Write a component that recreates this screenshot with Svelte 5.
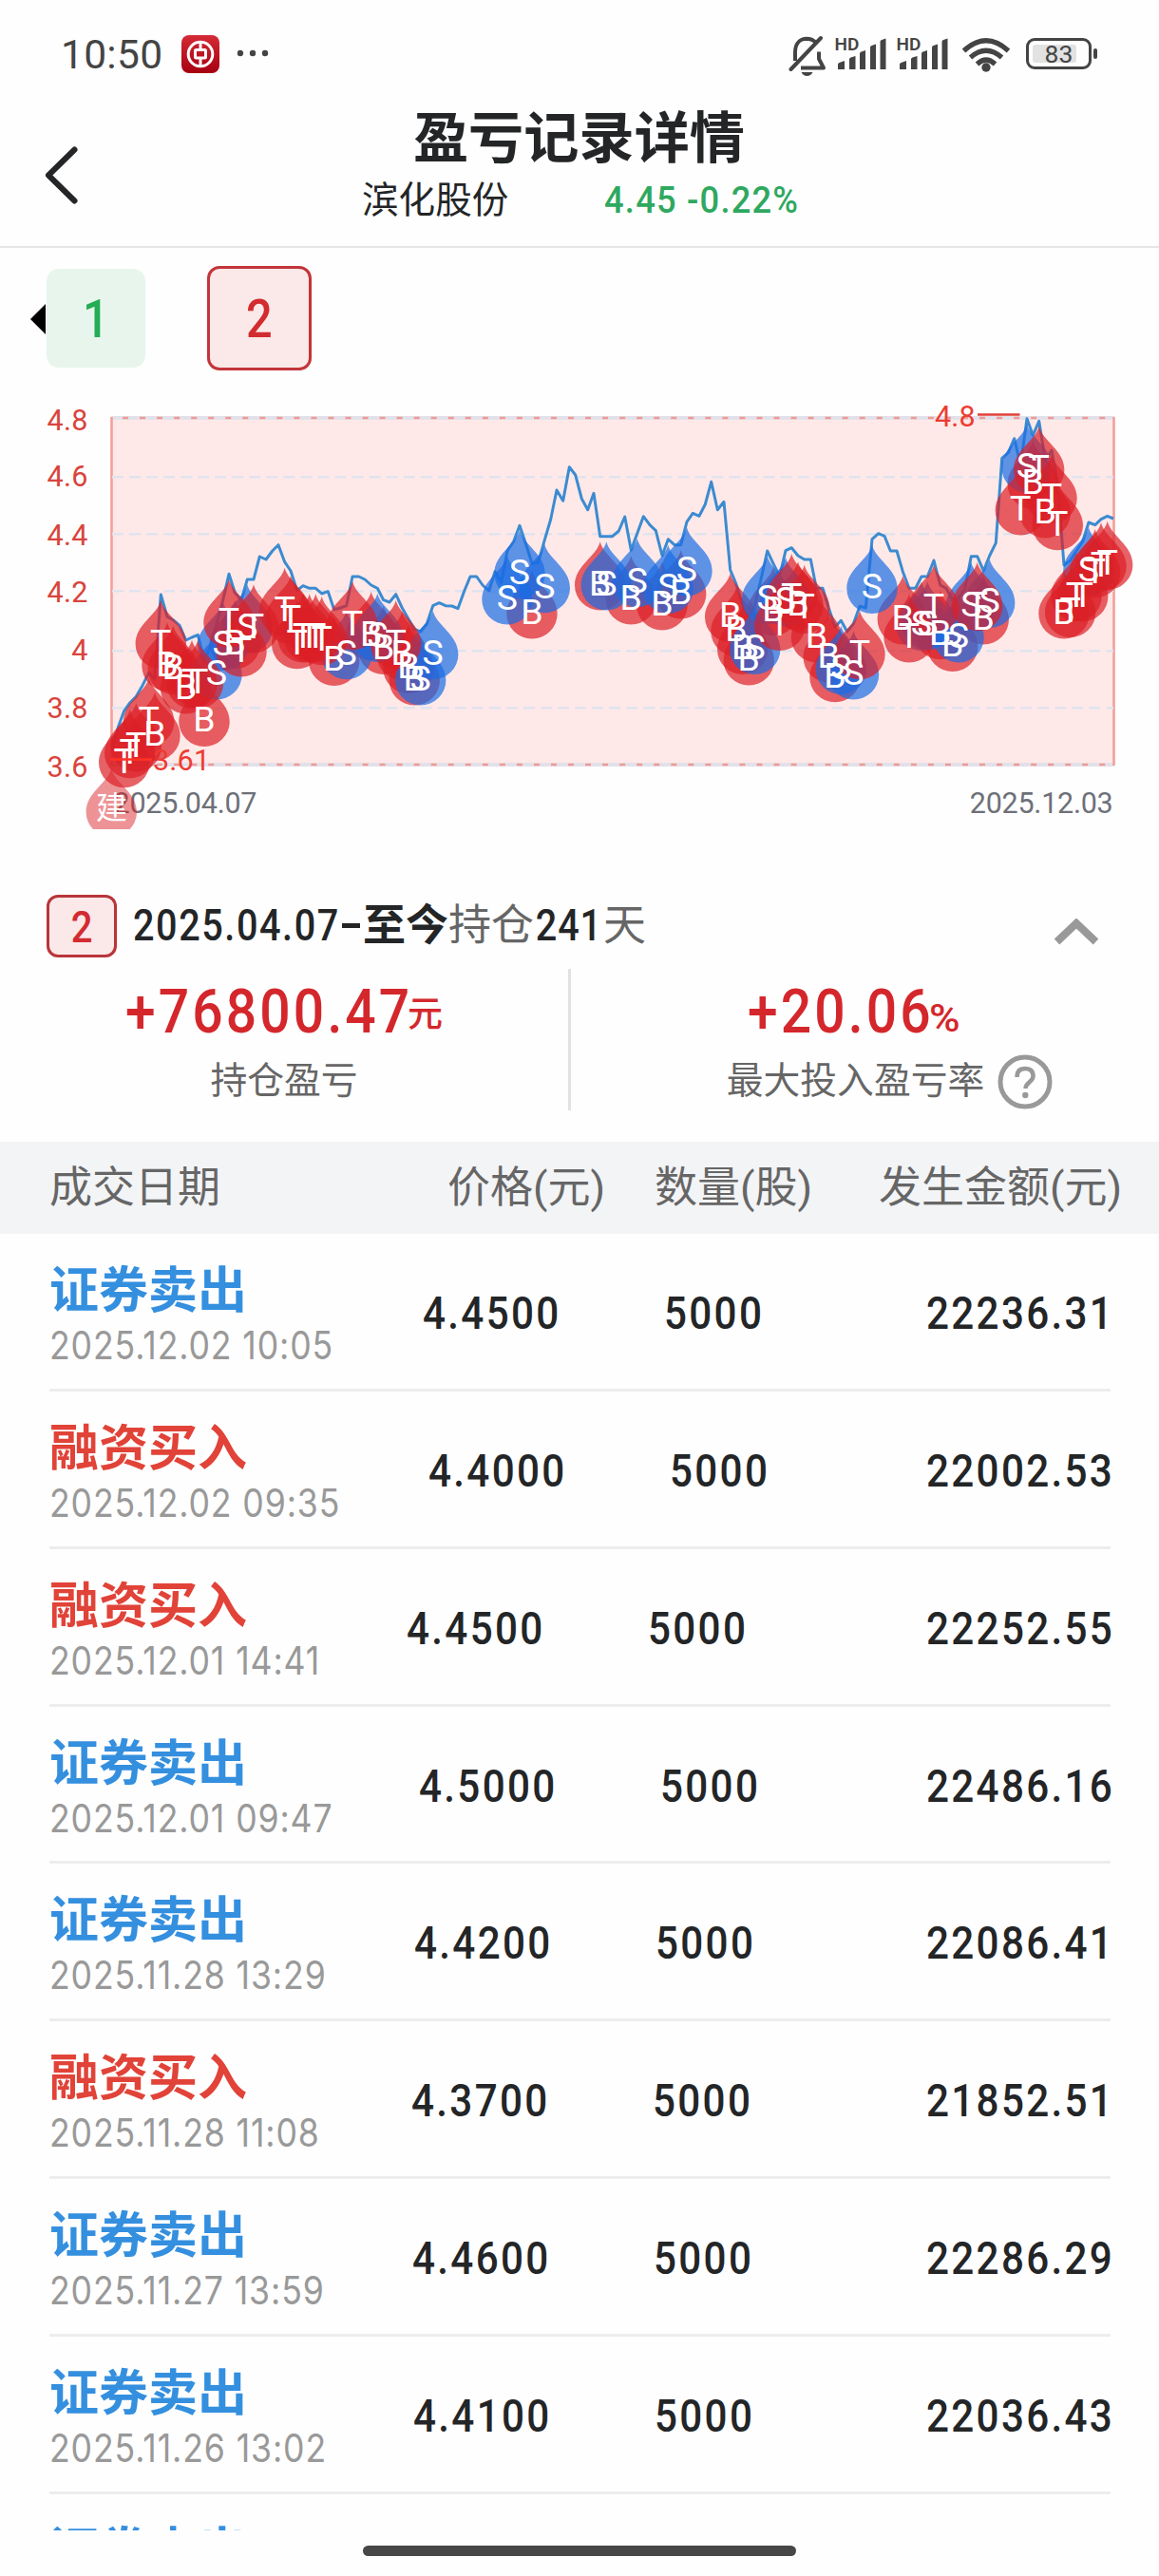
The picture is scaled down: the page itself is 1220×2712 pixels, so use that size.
<script lang="ts">
  // Price line, one vertex per trading day
  const line = [
    [118, 790], [124, 766.7], [130.7, 748.3], [136.7, 740], [143.3, 733.3], [150, 721.7], [156.7, 708.3], [162.7, 715], [169.3, 626], [176, 649.3], [182.3, 652.7], [189, 658.3], [195.7, 674], [202, 671], [208.3, 668.3], [215, 695], [221.7, 680], [228, 656.7], [234.7, 631.7], [241, 604.3], [247.3, 624], [254, 631.7], [260.3, 610], [267, 610], [273.3, 586], [280, 589], [286.7, 580], [293, 573.7], [299.7, 591.7], [306, 601], [312.7, 621.7], [319, 616.7], [325.7, 619.3], [332.3, 619.3], [338.7, 625], [345.3, 622.7], [351.7, 641.7], [358.3, 640], [364.7, 637.7], [371, 607], [377.7, 607], [384, 610], [390.7, 616], [397.3, 619.3], [403.7, 631.7], [410, 634], [416.7, 625.7], [423.3, 640], [430, 651.7], [436.3, 662.3], [442.7, 665], [449.3, 656.7], [455.7, 637.7], [462.3, 634.7],
    [469, 637.7], [475.7, 638], [482, 640.7], [488.7, 622.3], [495, 607], [501.7, 607], [508, 616], [514.7, 622], [521, 601.7], [527.7, 613.3], [534, 580], [540.7, 570], [547, 553.3], [553.7, 573.3], [560, 593.3], [566.7, 591.7], [573.3, 568.3], [579.7, 546.7], [586, 516], [592.7, 527.3], [599.3, 491.7], [605.7, 500], [612.3, 525], [618.7, 536.7], [625, 519.3], [631.7, 564.7], [638.3, 564.7], [644.7, 564.7], [651.3, 559], [657.7, 544], [664.3, 579.3], [670.7, 561.7], [677.3, 543.7], [684, 552.7], [690.3, 558.7], [697, 585], [703.3, 567.7], [710, 573.7], [716.7, 573.7], [723, 549.3], [729.3, 540.3], [736, 543.3], [742.3, 531], [748.7, 507.3], [755.3, 536.7], [762, 528.3], [768.7, 600], [775, 615], [781.7, 636.7], [788.3, 650], [794.7, 636.7], [801, 610], [807.7, 580], [814, 593.3], [820.7, 606.7], [827, 579.7], [833.3, 576.7],
    [840, 585], [846.7, 589], [853.3, 589], [859.3, 619.3], [866, 619.3], [872.3, 640], [879, 660], [885.3, 653.3], [891.7, 665], [898.3, 656.7], [905, 638.3], [911.3, 640], [918, 567.7], [924.7, 561.7], [931, 564.3], [937.3, 580], [944, 580], [950.3, 601.7], [957, 619.3], [963.7, 619.3], [970, 607], [976.3, 607], [983, 590], [989.7, 616], [996, 619.3], [1002.7, 631.7], [1009, 630], [1015.7, 620], [1022.3, 585.7], [1028.7, 585.7], [1035.3, 601], [1041.7, 585], [1048.3, 571.7], [1054.7, 482.3], [1061.3, 476.7], [1067.7, 461.7], [1074.3, 490], [1081, 440.7], [1087.3, 458.3], [1093.7, 443.3], [1100.3, 485], [1107, 474], [1113.3, 510], [1120, 595], [1126.7, 590], [1133, 580], [1139.7, 570], [1146, 550], [1152.7, 552.7], [1159, 546.7], [1165.7, 543.3], [1172, 546]
  ];
  const points = line.map((p) => p.join(',')).join(' ');

  // Trade markers by kind: B = buy, S = sell, T = both on one day
  const marks: Record<string, number[][]> = {
    B: [[163, 771.7], [176, 698.3], [182.3, 701.7], [195.7, 722.3], [215, 756.7], [247.3, 675], [351.7, 692.7], [390.7, 666], [403.7, 680.7], [423.3, 686.7], [430, 700.7], [436.3, 713.3], [560, 643.3], [631.7, 613.3], [664.3, 628.3], [697, 634.3], [716.7, 622.3], [768.7, 646.7], [775, 661.7], [781.7, 680.7], [788.3, 692.3], [814, 640], [840, 634.3], [859.5, 668.3], [872.3, 689.3], [879, 710], [950.3, 649.3], [989.7, 665], [1002.7, 677.7], [1035.3, 649.3], [1087.3, 506.7], [1100.3, 537.3], [1120, 643.3]],
    S: [[228, 707.3], [234.7, 676.7], [260.3, 658.3], [364.7, 686], [397.3, 667.7], [442.7, 713.3], [455.7, 686], [534, 628.3], [547, 601], [573.3, 616], [638.3, 613.3], [670.7, 610], [703.3, 616.7], [723, 598.3], [794.7, 680.7], [807.7, 628.3], [827, 630], [885.3, 701.7], [898.5, 707.3], [918, 616.7], [970, 655.7], [976.3, 655], [1009, 668.3], [1022.3, 635], [1041.7, 631.7], [1081, 489.3], [1146, 598.3]],
    T: [[130.7, 800], [136.7, 790], [143.3, 783.3], [156.7, 756.7], [169.3, 675], [202, 716.7], [208.3, 716.7], [241, 652.7], [254, 683.3], [267, 658.3], [299.7, 640.7], [306, 649.3], [312.7, 675], [319, 668.3], [325.7, 668.3], [332.3, 668.3], [338.7, 671], [371, 655], [416.7, 675], [820.7, 655.7], [833.3, 626], [846.7, 637.7], [905, 686], [957, 668.3], [983, 637.7], [1028.7, 635], [1093.7, 491.7], [1074.3, 534.3], [1107, 521.7], [1113.3, 550], [1126.7, 641.7], [1133, 625], [1139.7, 625], [1152.7, 600], [1159, 593.3], [1165.7, 591.7]]
  };
  const kinds = ['B', 'S', 'T'];
  const drop = 'M0-45C4-29 26.7-20 26.7 1A26.7 26.2 0 0 1-26.7 1C-26.7-20-4-29 0-45Z';
  const ticks: [string, number][] = [['4.8', 441.5], ['4.6', 501], ['4.4', 562.5], ['4.2', 623], ['4', 684], ['3.8', 745], ['3.6', 807]];
  const grid = [502.3, 562.3, 622.3, 685.3, 745.3];

  // w is the width the date column takes in that row
  const rows = [
    { kind: 'sell', date: '2025.12.02 10:05', price: '4.4500', amount: '22236.31', w: 393 },
    { kind: 'buy', date: '2025.12.02 09:35', price: '4.4000', amount: '22002.53', w: 399 },
    { kind: 'buy', date: '2025.12.01 14:41', price: '4.4500', amount: '22252.55', w: 376 },
    { kind: 'sell', date: '2025.12.01 09:47', price: '4.5000', amount: '22486.16', w: 389 },
    { kind: 'sell', date: '2025.11.28 13:29', price: '4.4200', amount: '22086.41', w: 384 },
    { kind: 'buy', date: '2025.11.28 11:08', price: '4.3700', amount: '21852.51', w: 381 },
    { kind: 'sell', date: '2025.11.27 13:59', price: '4.4600', amount: '22286.29', w: 382 },
    { kind: 'sell', date: '2025.11.26 13:02', price: '4.4100', amount: '22036.43', w: 383 },
    { kind: 'sell', date: '', price: '', amount: '', w: 384 }
  ];
</script>

{#snippet signal()}
  <svg class="signal" viewBox="0 0 54 40" width="54" height="40">
    <text x="-2.500" y="13.500" class="hd">HD</text>
    <path d="M1 34v-5q0-1.500 1.500-2L8 25v9zM13 34V23.500q0-1.500 1.500-2l5-1.500v14zM24 34V17.500q0-1.500 1.500-2l4.500-1.500v20zM35 34V11q0-1.500 1.500-2l4.500-1.500V34zM45.500 34V5q0-1.500 1.500-2l4.500-1.500V34z" />
  </svg>
{/snippet}

<div class="page">
  <div class="status">
    <span class="time">10:50</span>
    <svg class="bank" viewBox="0 0 40 40" width="40" height="40">
      <defs><linearGradient id="bank" x2="0" y2="1"><stop stop-color="#d52a37" /><stop offset="1" stop-color="#a60010" /></linearGradient></defs>
      <rect width="40" height="40" rx="8" fill="url(#bank)" />
      <g fill="none" stroke="#fff" stroke-width="3"><circle cx="20" cy="20" r="12.800" /><rect x="14.500" y="15.500" width="11" height="8.500" rx="1" /><path d="M20 7v8.500M20 24v9" /></g>
    </svg>
    <svg class="dots" viewBox="0 0 34 8" width="34" height="8"><circle cx="4" cy="4" r="3.200" /><circle cx="17" cy="4" r="3.200" /><circle cx="30" cy="4" r="3.200" /></svg>
    <div class="sys">
      <svg class="bell" viewBox="0 0 40 44" width="40" height="44">
        <g fill="none" stroke="#444" stroke-width="4" stroke-linejoin="round">
          <path d="M7 27V18C7 9 12 4 19 3.800c5 0 8 2 10 4.500M32 17.500V25l5 9.500H13" /><path d="M2.500 36 34 3" stroke-linecap="round" />
        </g>
        <path d="M13.500 39h12q-2 4-6 4t-6-4z" fill="#444" />
      </svg>
      {@render signal()}
      {@render signal()}
      <svg class="wifi" viewBox="0 0 52 40" width="52" height="40">
        <g fill="none" stroke="#444" stroke-width="5.200"><path d="M2.500 15.500Q26-6 49.500 15.500M9.500 22.500Q26 8 42.500 22.500M16.500 29.500Q26 20.500 35.500 29.500" /></g><circle cx="26" cy="33" r="4.700" fill="#444" />
      </svg>
      <div class="battery"><span class="level">83</span></div>
      <i class="cap"></i>
    </div>
  </div>

  <header>
    <svg class="back" viewBox="0 0 40 64" width="40" height="64"><path d="M33.500 5.500 6 32.500l27.500 27" fill="none" stroke="#232527" stroke-width="6" stroke-linecap="round" stroke-linejoin="round" /></svg>
    <div class="heading">
      <h1>盈亏记录详情</h1>
      <div class="quote"><span>滨化股份</span><b>4.45 -0.22%</b></div>
    </div>
  </header>

  <nav>
    <i class="arrow"></i>
    <span class="tab green"><b>1</b></span>
    <span class="tab red"><b>2</b></span>
  </nav>

  <svg class="chart" viewBox="0 410 1220 463" width="1220" height="463">
    <rect x="117.500" y="440" width="1055" height="365" fill="#ffe9e8" />
    <path d="M117 440H1173M117 805H1173" stroke="#e2e1ea" stroke-width="4" />
    <path d="M129 440H1173M129 805H1173" stroke="#f09a94" stroke-width="2.500" stroke-dasharray="6 12.040" />
    <path d="M117.500 439V806M1172.500 439V806" stroke="#f3a09a" stroke-width="2.600" />
    {#each grid as y}
      <path d="M118 {y}H1172" stroke="#e0e3ee" stroke-width="2.600" stroke-dasharray="12 6.040" />
    {/each}
    {#each ticks as [label, y]}
      <text class="tick" x="92.500" y={y + 11}>{label}</text>
    {/each}
    <text class="day" x="119.500" y="856">2025.04.07</text>
    <text class="day end" x="1171.500" y="856">2025.12.03</text>
    <polyline {points} fill="none" stroke="#3c8bd0" stroke-width="3" stroke-linejoin="round" />
    {#each kinds as kind}
      {#each marks[kind] as [x, y]}
        <path class="drop {kind}" d={drop} transform="translate({x} {y + 2})" />
      {/each}
    {/each}
    <path class="drop open" d={drop} transform="translate(117.300 854)" />
    {#each kinds as kind}
      {#each marks[kind] as [x, y]}
        <text class="letter" {x} y={y + 13.500}>{kind}</text>
      {/each}
    {/each}
    <text class="letter small" x="117.500" y="862">建</text>
    <path d="M116 799.500H160" stroke="#ff3226" stroke-width="2.600" />
    <text class="extreme" x="161" y="810.500">3.61</text>
    <path d="M1029 436.500H1073.500" stroke="#e23f38" stroke-width="2.600" />
    <text class="extreme" x="984" y="449">4.8</text>
  </svg>

  <section class="summary">
    <div class="period">
      <span class="badge"><b>2</b></span>
      <div class="range"><span class="from"><b>2025.04.07</b></span><i class="dash"></i><strong>至今</strong><em>持仓</em><span class="days"><b>241</b></span><em>天</em></div>
      <svg class="fold" viewBox="0 0 48 28" width="48" height="28"><path d="M3.500 24.500 24 5l20.500 19.500" fill="none" stroke="#999" stroke-width="8" /></svg>
    </div>
    <div class="stats">
      <div class="stat">
        <div class="value"><span class="sum"><b>+76800.47</b></span><small>元</small></div>
        <div class="name">持仓盈亏</div>
      </div>
      <div class="stat right">
        <div class="value"><span class="rate"><b>+20.06</b></span><small class="pct"><b>%</b></small></div>
        <div class="name">最大投入盈亏率
          <svg viewBox="0 0 58 58" width="58" height="58"><circle cx="29" cy="29" r="26" fill="none" stroke="#999" stroke-width="5" /><path d="M20.500 24q0-9 8.500-9t8.500 8c0 6-8 6.500-8 13" fill="none" stroke="#999" stroke-width="4.500" /><circle cx="29.300" cy="43" r="3.200" fill="#999" /></svg>
        </div>
      </div>
    </div>
  </section>

  <div class="thead"><span>成交日期</span><span>价格(元)</span><span>数量(股)</span><span>发生金额(元)</span></div>

  <div class="list">
    {#each rows as r}
      <div class="row">
        <div class="first" style="width:{r.w}px">
          <div class="type {r.kind}">{r.kind === 'sell' ? '证券卖出' : '融资买入'}</div>
          <div class="date"><span>{r.date}</span></div>
        </div>
        <span class="num"><b>{r.price}</b></span>
        <span class="num"><b>{r.price ? '5000' : ''}</b></span>
        <span class="num amount"><b>{r.amount}</b></span>
      </div>
    {/each}
  </div>
  <div class="home"><i></i></div>
</div>

<style>
  :global(body) { background: #fefefe; }
  .page { width: 1220px; height: 2712px; overflow: hidden; font-family: Roboto, 'Noto Sans CJK SC', sans-serif; color: #232527; display: flex; flex-direction: column; background: #fefefe; }
  .page > * { flex: none; }
  svg { display: block; flex: none; }

  /* Condensed figures: glyphs are narrowed and tracked out */
  b { display: inline-block; font-weight: 500; transform: scaleX(.87); transform-origin: left; letter-spacing: .055em; }

  .status { height: 100px; display: flex; align-items: flex-start; color: #444; padding-left: 64px; box-sizing: border-box; }
  .time { width: 127px; font-size: 42.5px; line-height: 116px; letter-spacing: .3px; }
  .bank { margin-top: 37px; }
  .dots { margin: 52px 0 0 18px; fill: #444; }
  .sys { display: flex; align-items: flex-start; margin: 37px 0 0 auto; padding-right: 65px; }
  .bell { margin-right: 11px; }
  .signal { fill: #444; margin: 2px 11px 0 0; overflow: visible; }
  .hd { font-size: 19px; font-weight: 600; }
  .wifi { margin: 1px 16px 0 1px; }
  .battery { width: 69px; height: 33px; margin-top: 3px; border: 3.500px solid #444; border-radius: 9px; box-sizing: border-box; padding: 3.500px; }
  .level { display: block; width: 46px; height: 19px; background: #e2e2e2; border-radius: 3px; font-size: 26.500px; line-height: 20px; text-indent: 13px; white-space: nowrap; }
  .cap { width: 4px; height: 11px; border-radius: 2px; background: #444; margin: 14px 0 0 2px; }

  header { height: 161px; box-sizing: border-box; border-bottom: 2px solid #e6e6e6; display: flex; }
  .back { margin: 52px 0 0 45px; }
  .heading { width: 1049px; text-align: center; }
  h1 { margin: 0; padding-top: 8px; font-size: 58.200px; line-height: 76px; font-weight: 700; }
  .quote { display: flex; font-size: 38.600px; line-height: 54px; padding-left: 296px; white-space: nowrap; }
  .quote span { width: 255px; text-align: left; }
  .quote b { color: #2fa860; letter-spacing: 1.300px; transform: scaleX(.94); }

  nav { height: 149px; display: flex; padding: 19px 0 0 32px; box-sizing: border-box; align-items: flex-start; }
  .arrow { border: 16px solid transparent; border-left: 0; border-right-color: #000; margin-top: 40px; }
  .tab { box-sizing: border-box; border-radius: 13px; text-align: center; font-size: 56px; }
  .tab b, .badge b { transform-origin: center; letter-spacing: 0; }
  .green { width: 104px; height: 104px; margin: 3px 65px 0 1px; background: #e8f5ec; color: #23ad55; line-height: 106px; }
  .red { width: 110px; height: 110px; border: 3px solid #c2353a; background: #fbe8e9; color: #d22b30; line-height: 106px; }

  .tick, .extreme, .day { font-size: 30.500px; letter-spacing: .2px; }
  .tick { fill: #d9443c; text-anchor: end; }
  .extreme { fill: #ee3b32; }
  .day { fill: #6e7079; letter-spacing: -.25px; }
  .end { text-anchor: end; }
  .drop { fill: #dc2026; fill-opacity: .7; }
  .drop.S { fill: #1a6ce4; }
  .drop.open { fill-opacity: .48; }
  .letter { font-size: 37.500px; fill: #fff; text-anchor: middle; }
  .small { font-size: 33px; }

  .summary { height: 329px; }
  .period { height: 147px; box-sizing: border-box; padding: 69px 63px 0 49px; display: flex; align-items: flex-start; }
  .badge { width: 74px; height: 66px; box-sizing: border-box; border: 3px solid #b9353a; border-radius: 12px; background: #fbe8e9; color: #d22b30; font-size: 46px; line-height: 63px; text-align: center; }
  .range { display: flex; margin-left: 17px; font-size: 45.500px; line-height: 66px; white-space: nowrap; }
  .range strong, .range em { font-style: normal; font-size: 45px; }
  .range em { color: #666; }
  .from { width: 220px; }
  .from b { letter-spacing: .04em; }
  .days { width: 73px; text-indent: 1px; }
  .days b { letter-spacing: .02em; }
  .dash { width: 19px; height: 4.500px; margin: 30px 3px 0 0; background: #232527; }
  .fold { margin: 25px 0 0 auto; }
  .stats { display: flex; height: 149px; }
  .stat { width: 601px; box-sizing: border-box; border-right: 3px solid #e0e3e4; }
  .right { width: 602px; border: 0; }
  .value { display: flex; height: 88px; line-height: 89px; font-size: 65.500px; color: #d4272c; padding-left: 132px; white-space: nowrap; }
  .right .value { padding-left: 186px; }
  .sum { width: 297px; }
  .rate { width: 191px; }
  .value small { font-size: 37px; line-height: 98px; font-weight: 500; }
  .value .pct { font-size: 41px; line-height: 105px; }
  .pct b { transform: scaleX(1.080); }
  .name { font-size: 38.800px; line-height: 56px; height: 58px; color: #666; display: flex; justify-content: center; gap: 14px; padding-top: 2px; }
  .name svg { margin-right: -69px; }

  .thead { height: 97px; background: #f3f4f6; color: #666; font-size: 45px; line-height: 97px; display: flex; white-space: nowrap; padding-left: 52px; }
  .thead span:nth-child(1) { width: 419px; }
  .thead span:nth-child(2) { width: 218px; }
  .thead span:nth-child(3) { width: 236px; }

  .list { height: 1365px; overflow: hidden; padding: 0 51px 0 52px; box-sizing: border-box; }
  .row { height: 165.860px; box-sizing: border-box; border-bottom: 3px solid #ededed; display: flex; align-items: flex-start; }
  .first { flex: none; padding-top: 30px; white-space: nowrap; }
  .type { font-size: 52px; line-height: 61px; height: 60px; font-weight: 700; }
  .sell { color: #348fdf; }
  .buy { color: #e14338; }
  .date { font-size: 40.500px; line-height: 56px; color: #999; }
  .date span { display: inline-block; font-family: Inter, sans-serif; letter-spacing: 1px; transform: scaleX(.88); transform-origin: left; }
  .num { width: 254px; flex: none; font-size: 48.500px; line-height: 168px; white-space: nowrap; }
  .num.amount { width: 194.500px; margin-left: auto; }
  .home { height: 48px; display: flex; justify-content: center; padding-top: 16px; box-sizing: border-box; }
  .home i { width: 456px; height: 11px; border-radius: 6px; background: #474747; }
</style>
